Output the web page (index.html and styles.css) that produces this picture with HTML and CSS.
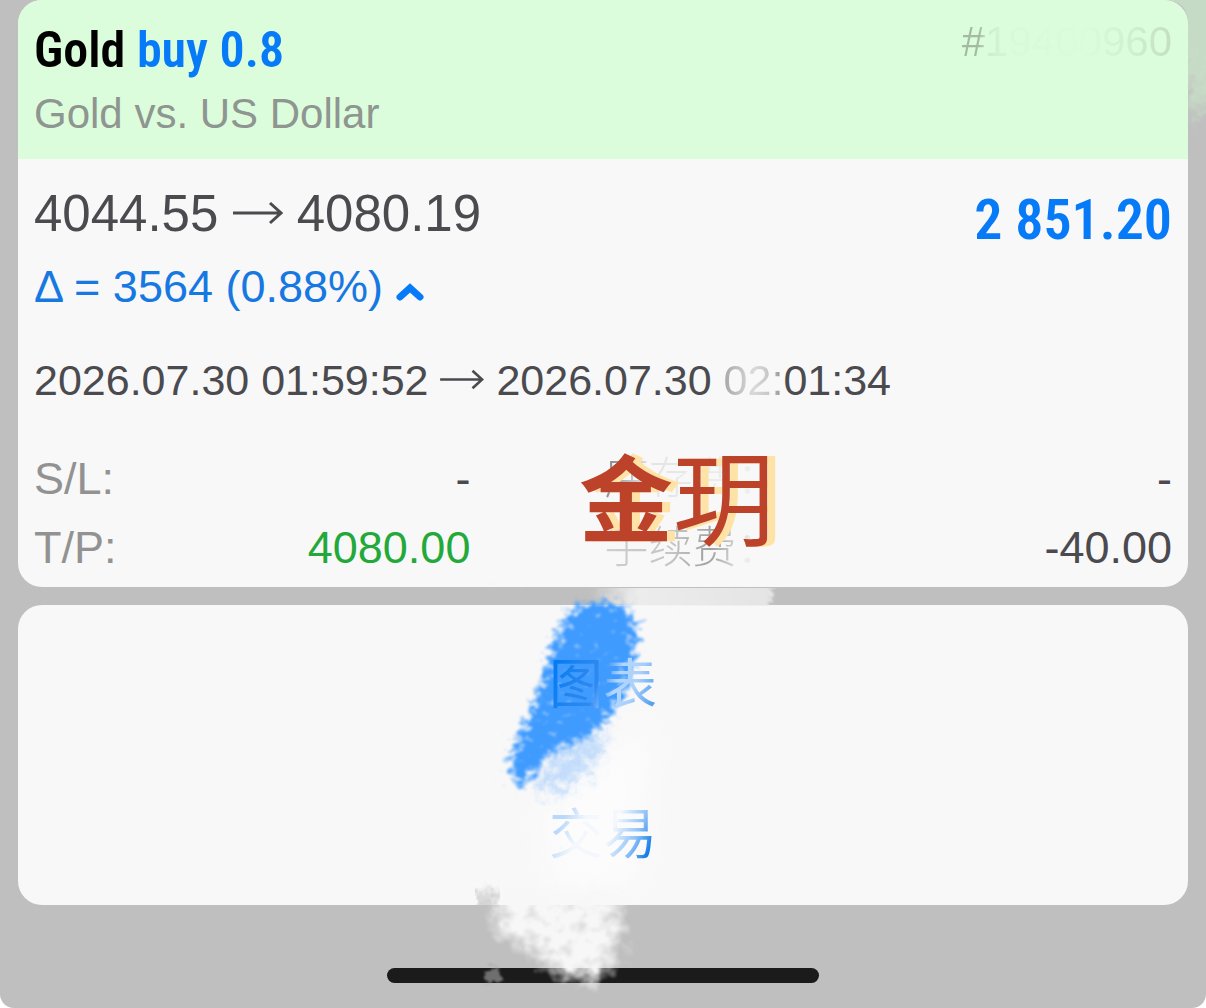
FILE: index.html
```html
<!DOCTYPE html>
<html lang="zh-CN">
<head>
<meta charset="utf-8">
<meta name="viewport" content="width=device-width, initial-scale=1">
<title>Gold buy 0.8</title>
<link rel="stylesheet" href="styles.css">
</head>
<body>
<main class="sheet">
  <article class="card position">
    <header class="head">
      <div class="head-row">
        <h1 class="title">Gold <span class="side">buy 0.8</span></h1>
        <span class="ticket">#19400960</span>
      </div>
      <p class="symbol-name">Gold vs. US Dollar</p>
    </header>
    <div class="body">
      <div class="quote">
        <div class="price">4044.55
          <svg class="arrow" viewBox="0 0 50 24" aria-hidden="true"><path d="M0 12H48M37 2L48 12L37 22"/></svg>
          4080.19</div>
        <strong class="profit">2 851.20</strong>
      </div>
      <button class="delta" type="button">Δ = 3564 (0.88%)
        <svg class="chevron" viewBox="0 0 28 20" aria-hidden="true"><path d="M4 15L14 6L24 15"/></svg>
      </button>
      <div class="times">2026.07.30 01:59:52
        <svg class="arrow small" viewBox="0 0 50 24" aria-hidden="true"><path d="M0 12H48M37 2L48 12L37 22"/></svg>
        2026.07.30 <span class="worn">02:</span>01:34</div>
      <dl class="details">
        <div class="item"><dt>S/L:</dt><dd>-</dd></div>
        <div class="item"><dt class="faded swap">库存费：</dt><dd>-</dd></div>
        <div class="item"><dt>T/P:</dt><dd class="hit">4080.00</dd></div>
        <div class="item"><dt class="faded fee">手续费：</dt><dd>-40.00</dd></div>
      </dl>
    </div>
  </article>
  <nav class="card actions">
    <button class="action" type="button"><span class="chart">图表</span></button>
    <button class="action" type="button"><span class="trade">交易</span></button>
  </nav>
  <footer class="foot"><div class="home-bar"></div></footer>

  <svg class="paint" viewBox="0 0 1206 1008" aria-hidden="true">
    <defs>
      <filter id="crayon" x="-30%" y="-30%" width="160%" height="160%" color-interpolation-filters="sRGB">
        <feGaussianBlur in="SourceAlpha" stdDeviation="9" result="b"/>
        <feTurbulence type="fractalNoise" baseFrequency="0.12 0.16" numOctaves="2" seed="4"/>
        <feColorMatrix values="0 0 0 0 0  0 0 0 0 0  0 0 0 0 0  1 0 0 0 0" result="n"/>
        <feComposite in="b" in2="n" operator="arithmetic" k1="0" k2="2.2" k3="2.4" k4="-2" result="m"/>
        <feFlood flood-color="#409bff"/>
        <feComposite in2="m" operator="in"/>
        <feGaussianBlur stdDeviation="0.8"/>
      </filter>
      <filter id="chalk" x="-30%" y="-30%" width="160%" height="160%" color-interpolation-filters="sRGB">
        <feGaussianBlur in="SourceAlpha" stdDeviation="12" result="b"/>
        <feTurbulence type="fractalNoise" baseFrequency="0.08 0.09" numOctaves="3" seed="9"/>
        <feColorMatrix values="0 0 0 0 0  0 0 0 0 0  0 0 0 0 0  1 0 0 0 0" result="n"/>
        <feComposite in="b" in2="n" operator="arithmetic" k1="0" k2="1.5" k3="1.2" k4="-1.1" result="m"/>
        <feFlood flood-color="#f7f7f7"/>
        <feComposite in2="m" operator="in"/>
        <feGaussianBlur stdDeviation="0.8"/>
      </filter>
      <filter id="rough" x="-30%" y="-30%" width="160%" height="160%">
        <feTurbulence type="fractalNoise" baseFrequency="0.12 0.18" numOctaves="3" seed="4" result="n"/>
        <feDisplacementMap in="SourceGraphic" in2="n" scale="20" xChannelSelector="R" yChannelSelector="G"/>
        <feGaussianBlur stdDeviation="1"/>
      </filter>
      <filter id="haze" x="-30%" y="-30%" width="160%" height="160%">
        <feGaussianBlur stdDeviation="7" result="b"/>
        <feTurbulence type="fractalNoise" baseFrequency="0.09" numOctaves="3" seed="9" result="n"/>
        <feDisplacementMap in="b" in2="n" scale="34" xChannelSelector="R" yChannelSelector="G"/>
      </filter>
      <filter id="soft" x="-30%" y="-30%" width="160%" height="160%"><feGaussianBlur stdDeviation="14"/></filter>
      <linearGradient id="gapwhite" x1="0" x2="1" y1="0" y2="0">
        <stop offset="0" stop-color="#f4f4f4" stop-opacity="0"/>
        <stop offset=".25" stop-color="#f4f4f4" stop-opacity=".85"/>
        <stop offset="1" stop-color="#ebebeb" stop-opacity=".85"/>
      </linearGradient>
      <clipPath id="gap"><rect x="18" y="588" width="1170" height="18"/></clipPath>
      <clipPath id="edge"><path d="M1164 0H1206V140H1188V24Q1188 0 1164 0Z"/></clipPath>
    </defs>
    <g clip-path="url(#gap)"><path d="M590 570H778L768 620H590Z" fill="url(#gapwhite)" filter="url(#rough)"/></g>
    <g clip-path="url(#edge)"><path d="M1150 -30H1250V50L1216 76L1198 124L1180 70Z" fill="#c9e3c8" opacity=".8" filter="url(#haze)"/></g>
    <path d="M650 720L590 770L540 815L560 900L640 880Z" fill="#fdfdfd" opacity=".8" filter="url(#soft)"/>
    <path d="M536 786Q556 744 606 732L598 758L556 796Z" fill="#a9cffc" opacity=".7" filter="url(#haze)"/>
    <path d="M574 604Q600 596 632 606Q644 625 636 655Q632 694 610 720Q592 744 556 750Q538 768 522 796Q504 782 510 750Q536 700 546 660Q556 622 574 604Z" filter="url(#crayon)"/>
    <path d="M490 890L624 886L622 944L612 984L564 984L526 950L488 934Z" filter="url(#chalk)"/>
    <path d="M480 892Q487 886 493 892L495 922L480 916Z" fill="#c0c0c0" filter="url(#haze)"/>
    <circle cx="493" cy="975" r="8" fill="#a8a8a8" opacity=".6" filter="url(#rough)"/>
  </svg>
  <p class="stamp"><span class="stamp-gold">金</span>玥</p>
</main>
</body>
</html>
```
FILE: styles.css
```css
* { box-sizing: border-box; }

body {
  margin: 0;
  background: #fff;
  color: #4a4a4f;
  font-family: "Liberation Sans", "Noto Sans CJK SC", sans-serif;
}

h1, p, dl, dd { margin: 0; }

button {
  border: 0;
  padding: 0;
  background: none;
  font: inherit;
  cursor: pointer;
}

.sheet {
  position: relative;
  display: flex;
  flex-direction: column;
  gap: 18px;
  min-height: 100vh;
  padding: 0 18px;
  background: #bfbfbf;
  border-radius: 0 0 14px 14px;
  overflow: hidden;
}

.card {
  background: #f8f8f8;
  border-radius: 24px;
  overflow: hidden;
}

.head {
  padding: 20px 16px 15px;
  background: #dcfddb;
}

.head-row, .quote, .item {
  display: flex;
  justify-content: space-between;
}

.title {
  color: #000;
  font: 600 50px/60px "Roboto Condensed", "Open Sans Condensed", "Noto Sans CJK SC", sans-serif;
}

.side, .profit { color: #077bf7; }

.ticket {
  font-size: 42px;
  line-height: 44px;
  color: transparent;
  background: linear-gradient(90deg, #a3bba2 8%, #cfeecd 13%, #d8fad7 25%, #dafcd9 60%, #cfefce 82%, #c3dfc2 100%);
  background-clip: text;
}

.symbol-name {
  color: #8f9590;
  font-size: 42px;
  line-height: 60px;
  padding-top: 4px;
}

.body { padding: 20px 16px 5px; }

.price { font-size: 51px; line-height: 70px; }

.profit {
  font: 600 56px/82px "Roboto Condensed", "Open Sans Condensed", "Noto Sans CJK SC", sans-serif;
}

.quote { height: 72px; }

.arrow {
  width: 50px;
  height: 24px;
  fill: none;
  stroke: currentColor;
  stroke-width: 3;
  vertical-align: 6px;
}

.arrow.small {
  width: 44px;
  height: 21px;
  vertical-align: 5px;
}

.delta {
  display: block;
  margin-top: 8px;
  color: #1778e2;
  font-size: 45px;
  line-height: 56px;
}

.chevron {
  width: 28px;
  height: 20px;
  fill: none;
  stroke: #077bf7;
  stroke-width: 7;
  stroke-linecap: round;
}

.times {
  padding-top: 35px;
  font-size: 43px;
  line-height: 60px;
}

.worn {
  color: transparent;
  background: linear-gradient(90deg, #a8a8aa, #d9d9da 50%, #c4c4c6 80%, #8a8a8d);
  background-clip: text;
}

.details {
  display: grid;
  grid-template-columns: 436fr 567fr;
  column-gap: 134px;
  padding-top: 34px;
  font-size: 45px;
  line-height: 69px;
}

.item dt { color: #929292; }
.item .hit { color: #22a93a; }

.item .faded {
  font-size: 44px;
  font-weight: 300;
  color: transparent;
  background-clip: text;
}

.swap { background: linear-gradient(100deg, #777, #e4e4e4 26%, #f2f2f2); }
.fee { background: linear-gradient(100deg, #d0d0d0, #c4c4c4 40%, #a0a0a0 60%, #ececec 80%); }

.actions {
  display: flex;
  flex-direction: column;
}

.action {
  height: 150px;
  font-size: 54px;
}

.chart, .trade {
  position: relative;
  z-index: 1;
  color: transparent;
  background-clip: text;
}

.chart { background-image: linear-gradient(110deg, #067cf4 10%, #1f84f0 25%, #3089f2 45%, #b5d7fd 60%, #a9d0fb 75%, #4a9af0 95%); }
.trade { background-image: linear-gradient(115deg, #b9d8fb 15%, #f4f8fc 32%, #f4f8fc 55%, #8cc0f8 75%, #0f78e6 90%); }

.foot {
  display: flex;
  justify-content: center;
  padding: 45px 0 24px;
}

.home-bar {
  width: 37%;
  height: 15px;
  border-radius: 8px;
  background: #1b1b1b;
}

.paint {
  position: absolute;
  top: 0;
  left: 0;
  width: 100%;
  pointer-events: none;
}

.stamp {
  position: absolute;
  top: 434px;
  left: 48%;
  display: flex;
  align-items: center;
  color: #bd422a;
  font: 400 102px/120px "Noto Sans CJK SC", sans-serif;
  text-shadow: 8px 0 #ffe3a6;
}

.stamp-gold {
  font-size: 94px;
  font-weight: 700;
}
```
